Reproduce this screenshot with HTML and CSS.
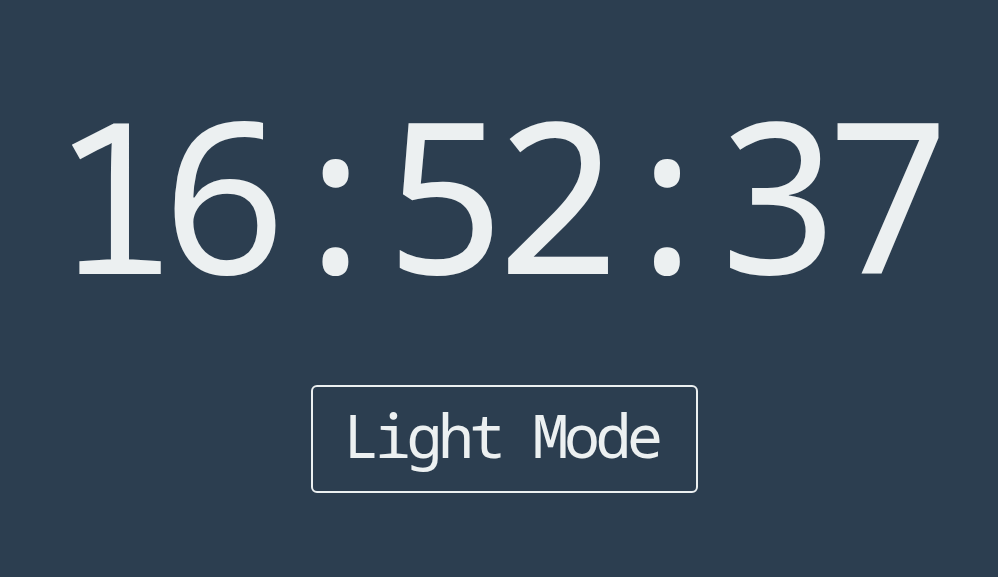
FILE: index.html
```html
<!DOCTYPE html>
<html lang="en">
<head>
<meta charset="utf-8">
<title>Clock</title>
<link rel="stylesheet" href="styles.css">
</head>
<body>
<main class="clock-app">
  <div class="clock-time">16:52:37</div>
  <button class="mode-toggle" type="button">Light Mode</button>
</main>
</body>
</html>
```
FILE: styles.css
```css
html, body {
  margin: 0;
  height: 100%;
}
body {
  background: #2c3e50;
  color: #ecf0f1;
  font-family: "Noto Sans Mono", "DejaVu Sans Mono", monospace;
}
.clock-app {
  box-sizing: border-box;
  height: 100%;
  display: flex;
  flex-direction: column;
  align-items: center;
  padding-top: 49.5px;
  padding-left: 10px;
  gap: 49.5px;
}
.clock-time {
  font-size: 210px;
  letter-spacing: -15.5px;
  line-height: normal;
  padding-right: 21px;
}
.mode-toggle {
  font-family: "Noto Sans Mono", "DejaVu Sans Mono", monospace;
  font-size: 60px;
  letter-spacing: -4.5px;
  line-height: normal;
  color: #ecf0f1;
  background: transparent;
  border: 2px solid #ecf0f1;
  border-radius: 6px;
  padding: 6.5px 37px 15.5px 31px;
  cursor: pointer;
}
```
